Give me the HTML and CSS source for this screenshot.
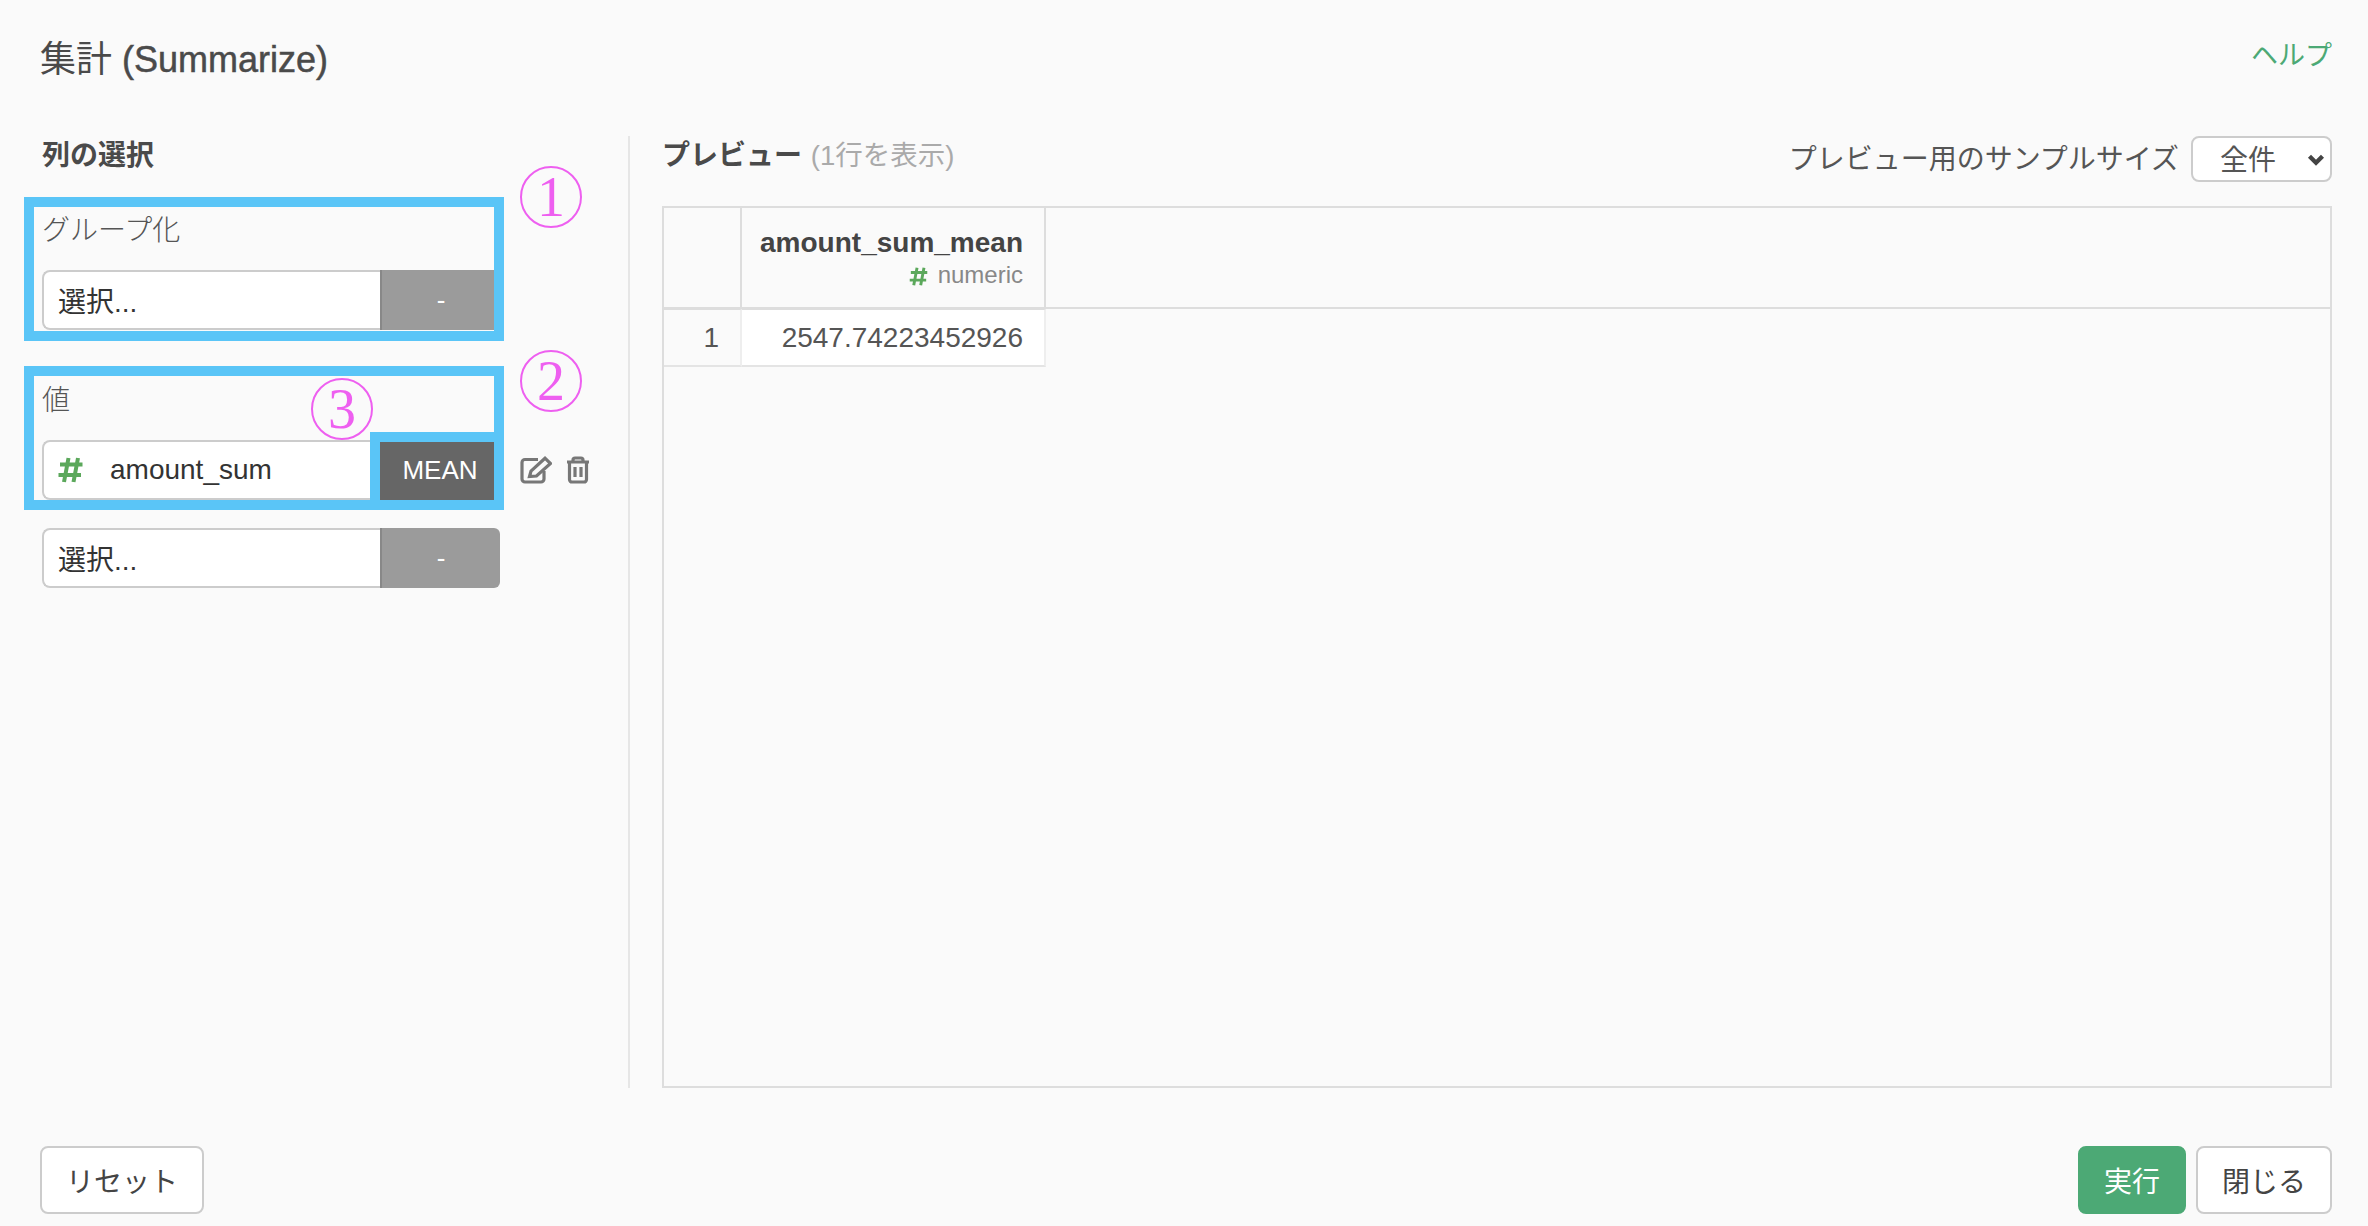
FILE: index.html
```html
<!DOCTYPE html>
<html lang="ja">
<head>
  <meta charset="UTF-8">
  <title>集計 (Summarize)</title>
  <link rel="stylesheet" href="styles.css">
</head>
<body>
  <div class="page">
    <header class="header">
      <h1 class="title">集計 <span class="title-en">(Summarize)</span></h1>
      <a class="help" href="#">ヘルプ</a>
    </header>

    <main class="main">
      <section class="left">
        <h2 class="heading">列の選択</h2>

        <div class="label">グループ化</div>
        <div class="row">
          <div class="field">選択...</div>
          <button class="agg">-</button>
        </div>

        <div class="label label-next">値</div>
        <div class="row">
          <div class="field">
            <svg class="hash" viewBox="0 0 25 26"><path d="M10.5 1 L6 25 M20 1 L15.5 25 M2 7.5 H24.5 M0.5 18 H23"/></svg>
            <span class="field-name">amount_sum</span>
          </div>
          <button class="agg agg-dark">MEAN</button>
          <svg class="icon icon-edit" viewBox="0 0 32 28"><path d="M18 3.5 H5 a3 3 0 0 0 -3 3 V23 a3 3 0 0 0 3 3 H21 a3 3 0 0 0 3 -3 V15"/><path d="M9.5 20.5 L11 15 L25 2.2 L30.5 7.5 L16.5 20 Z"/></svg>
          <svg class="icon icon-trash" viewBox="0 0 24 28"><path d="M1 6 H23 M7 6 V4 a2 2 0 0 1 2 -2 H15 a2 2 0 0 1 2 2 V6 M3.5 6 V23.5 a2.5 2.5 0 0 0 2.5 2.5 H18 a2.5 2.5 0 0 0 2.5 -2.5 V6 M9 11 V21 M15 11 V21"/></svg>
        </div>

        <div class="row row-last">
          <div class="field">選択...</div>
          <button class="agg agg-end">-</button>
        </div>
      </section>

      <section class="right">
        <div class="preview-bar">
          <h2 class="heading">プレビュー <span class="count">(1行を表示)</span></h2>
          <div class="sample">
            <label class="sample-label" for="sample">プレビュー用のサンプルサイズ</label>
            <div class="select-wrap">
              <select class="select" id="sample">
                <option>全件</option>
              </select>
              <svg class="chevron" viewBox="0 0 16 12"><path d="M2 3 L8 9 L14 3"/></svg>
            </div>
          </div>
        </div>

        <div class="table-box">
          <table class="table">
            <thead>
              <tr>
                <th class="col-index"></th>
                <th class="col-value">
                  <div class="col-name">amount_sum_mean</div>
                  <div class="col-type">
                    <svg class="hash hash-small" viewBox="0 0 25 26"><path d="M10.5 1 L6 25 M20 1 L15.5 25 M2 7.5 H24.5 M0.5 18 H23"/></svg>
                    numeric
                  </div>
                </th>
                <th class="col-fill"></th>
              </tr>
            </thead>
            <tbody>
              <tr>
                <td class="cell-index">1</td>
                <td class="cell-value">2547.74223452926</td>
                <td class="cell-fill"></td>
              </tr>
            </tbody>
          </table>
        </div>
      </section>
    </main>

    <footer class="footer">
      <button class="btn">リセット</button>
      <div class="footer-right">
        <button class="btn btn-run">実行</button>
        <button class="btn">閉じる</button>
      </div>
    </footer>

    <!-- annotations drawn over the screen -->
    <div class="mark mark-group"></div>
    <div class="mark mark-value"></div>
    <div class="mark mark-agg"></div>
    <div class="num num-1">1</div>
    <div class="num num-2">2</div>
    <div class="num num-3">3</div>
  </div>
</body>
</html>
```

FILE: styles.css
```css
* {
  box-sizing: border-box;
}
html, body {
  margin: 0;
  padding: 0;
}
body {
  font-family: "Liberation Sans", "Noto Sans CJK JP", sans-serif;
  font-size: 28px;
  color: #444;
  background-color: #fafafa;
}
.page {
  position: relative;
  display: flex;
  flex-direction: column;
  height: 1226px;
  overflow: hidden;
}

/* header */
.header {
  display: flex;
  justify-content: space-between;
  align-items: flex-start;
  height: 136px;
  padding: 0 36px 0 40px;
}
.title {
  margin: 38px 0 0;
  font-size: 36px;
  line-height: 44px;
  font-weight: 400;
  color: #4a4a4a;
}
.title-en {
  -webkit-text-stroke: 0.5px #4a4a4a;
}
.help {
  margin-top: 38px;
  font-size: 27px;
  line-height: 36px;
  color: #4ca975;
  text-decoration: none;
}

/* main */
.main {
  display: flex;
  height: 952px;
}
.left {
  width: 630px;
  padding-left: 42px;
  border-right: 2px solid #e6e6e6;
}
.heading {
  margin: 0;
  font-size: 28px;
  line-height: 40px;
  font-weight: 700;
  color: #4a4a4a;
}
.left .heading {
  margin-bottom: 35px;
}
.label {
  height: 40px;
  margin-bottom: 19px;
  font-size: 28px;
  line-height: 40px;
  font-weight: 300;
  color: #555;
}
.label-next {
  margin-top: 51px;
}
.row {
  display: flex;
  align-items: center;
  height: 60px;
}
.row-last {
  margin-top: 28px;
}
.field {
  display: flex;
  align-items: center;
  width: 338px;
  height: 60px;
  padding-left: 14px;
  background-color: #fff;
  border: 2px solid #ccc;
  border-right: none;
  border-radius: 8px 0 0 8px;
  font-size: 28px;
  color: #333;
}
.field-name {
  margin-left: 27px;
}
.hash {
  width: 25px;
  height: 26px;
  fill: none;
  stroke: #5ba85b;
  stroke-width: 4;
}
.hash-small {
  width: 19px;
  height: 19px;
  margin-right: 3px;
  vertical-align: -3px;
}
.agg {
  width: 120px;
  height: 60px;
  padding: 0;
  background-color: #9b9b9b;
  border: none;
  border-left: 2px solid #888;
  font-family: inherit;
  font-size: 26px;
  color: #fff;
}
.agg-dark {
  background-color: #666;
  border-left: none;
}
.agg-end {
  border-radius: 0 6px 6px 0;
}
.icon {
  fill: none;
  stroke: #777;
  stroke-width: 3.2;
}
.icon-edit {
  width: 32px;
  height: 28px;
  margin-left: 20px;
}
.icon-trash {
  width: 24px;
  height: 28px;
  margin-left: 14px;
}

/* preview */
.right {
  display: flex;
  flex-direction: column;
  flex: 1;
  padding: 0 36px 0 32px;
}
.preview-bar {
  display: flex;
  justify-content: space-between;
  align-items: flex-start;
  height: 70px;
}
.count {
  margin-left: 1px;
  font-size: 27.5px;
  font-weight: 400;
  color: #aaa;
}
.sample {
  display: flex;
  align-items: center;
  gap: 12px;
  height: 46px;
}
.sample-label {
  padding-bottom: 4px;
  font-size: 28px;
  color: #555;
}
.select-wrap {
  position: relative;
}
.select {
  display: block;
  width: 141px;
  height: 46px;
  padding: 2px 0 0 27px;
  background-color: #fff;
  border: 2px solid #ccc;
  border-radius: 8px;
  appearance: none;
  font-family: inherit;
  font-size: 28px;
  color: #555;
}
.chevron {
  position: absolute;
  top: 17px;
  right: 7px;
  width: 18px;
  height: 13px;
  fill: none;
  stroke: #444;
  stroke-width: 4;
}
.table-box {
  flex: 1;
  border: 2px solid #ddd;
}
.table {
  width: 100%;
  border-collapse: separate;
  border-spacing: 0;
}
.table th {
  height: 101px;
  padding: 0;
  border-bottom: 2px solid #ddd;
  vertical-align: top;
}
.col-index {
  width: 78px;
  border-right: 2px solid #ddd;
}
.col-value {
  width: 304px;
  padding-right: 21px !important;
  border-right: 2px solid #ddd;
  text-align: right;
}
.col-name {
  margin-top: 17px;
  font-size: 28px;
  line-height: 36px;
  font-weight: 700;
  color: #444;
}
.col-type {
  font-size: 24px;
  line-height: 28px;
  font-weight: 400;
  color: #888;
}
.table td {
  height: 58px;
  padding: 0 21px 0 0;
  font-size: 28px;
  text-align: right;
  color: #555;
}
.cell-index {
  border-top: 1px solid #ddd;
  border-right: 2px solid #eee;
  border-bottom: 2px solid #e4e4e4;
}
.cell-value {
  background-color: #fff;
  border-top: 1px solid #ddd;
  border-right: 2px solid #eee;
  border-bottom: 2px solid #e4e4e4;
}

/* footer */
.footer {
  display: flex;
  justify-content: space-between;
  align-items: flex-start;
  padding: 58px 36px 0 40px;
}
.footer-right {
  display: flex;
  gap: 10px;
}
.btn {
  height: 68px;
  padding: 0 24px;
  background-color: #fff;
  border: 2px solid #ccc;
  border-radius: 8px;
  font-family: inherit;
  font-size: 28px;
  color: #444;
}
.btn-run {
  width: 108px;
  padding: 0;
  background-color: #4ca975;
  border-color: #4ca975;
  color: #fff;
}

/* annotations */
.mark {
  position: absolute;
  border: 10px solid #5ac5f7;
}
.mark-group {
  left: 24px;
  top: 197px;
  width: 480px;
  height: 144px;
}
.mark-value {
  left: 24px;
  top: 366px;
  width: 480px;
  height: 144px;
}
.mark-agg {
  left: 370px;
  top: 432px;
  width: 134px;
  height: 78px;
}
.num {
  position: absolute;
  width: 62px;
  height: 62px;
  border: 2px solid #ee5ff0;
  border-radius: 50%;
  font-family: "Liberation Serif", serif;
  font-size: 56px;
  line-height: 58px;
  text-align: center;
  color: #ee5ff0;
}
.num-1 {
  left: 520px;
  top: 166px;
}
.num-2 {
  left: 520px;
  top: 350px;
}
.num-3 {
  left: 311px;
  top: 378px;
}
```
